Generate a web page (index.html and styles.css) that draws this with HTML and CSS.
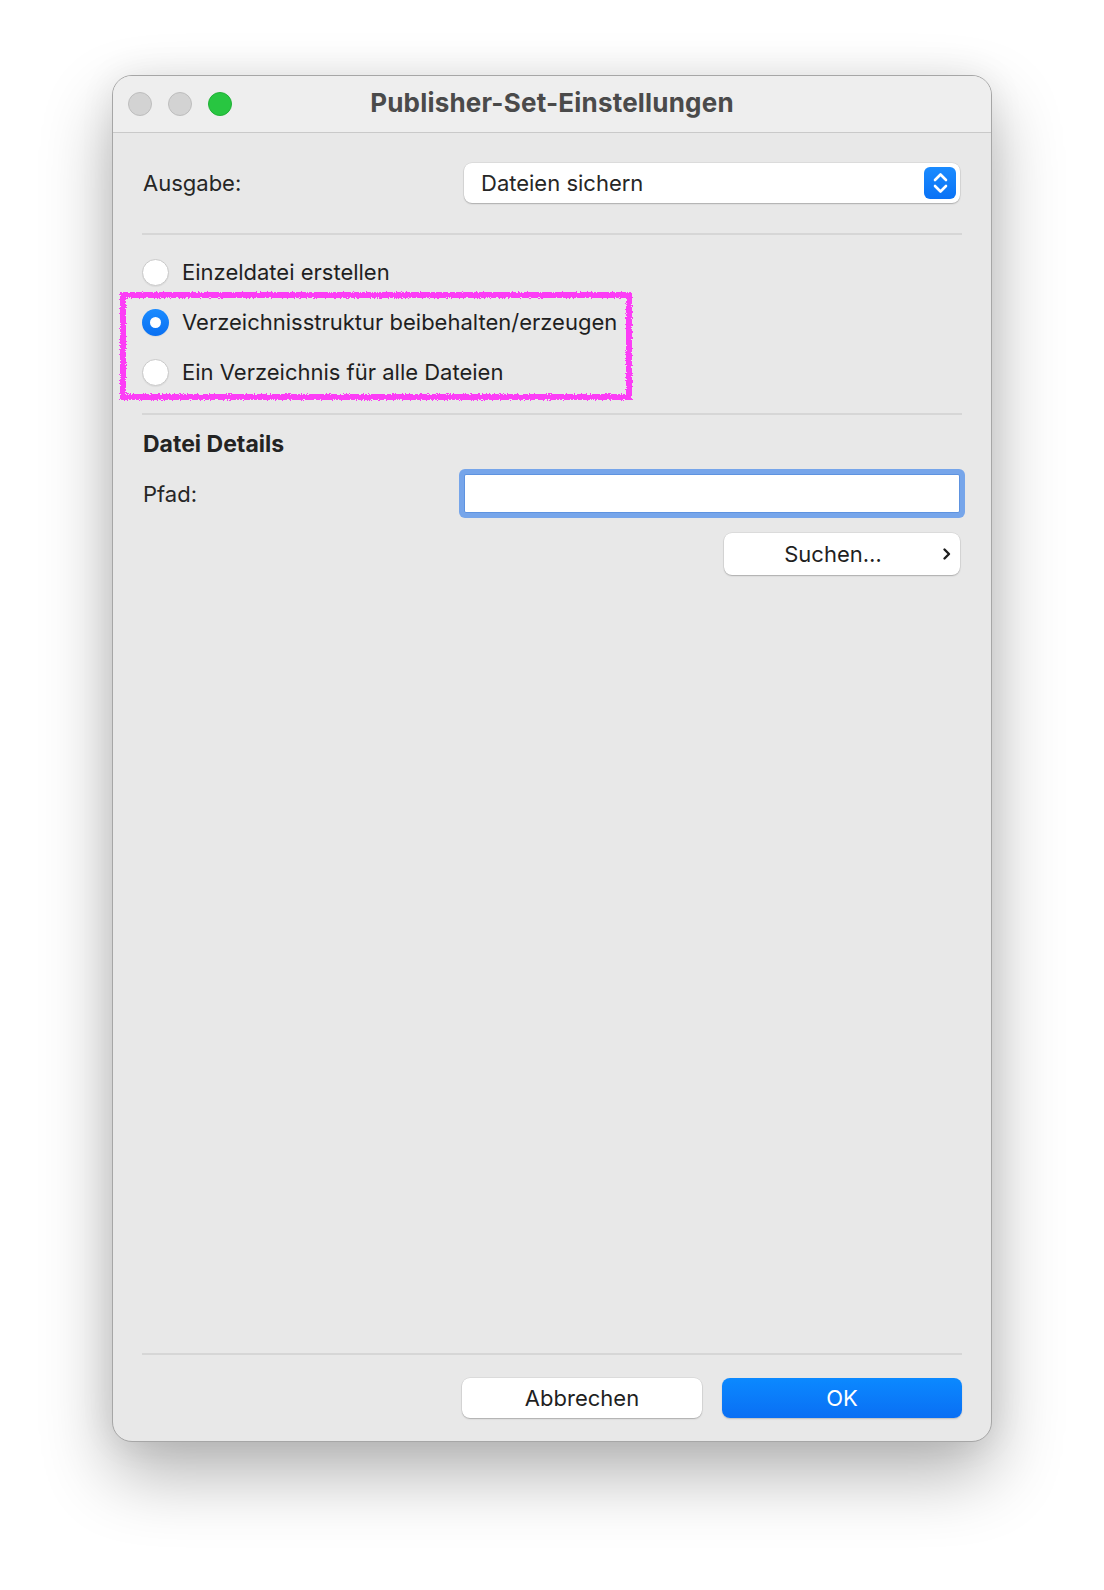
FILE: index.html
```html
<!DOCTYPE html>
<html lang="de">
<head>
<meta charset="utf-8">
<title>Publisher-Set-Einstellungen</title>
<link rel="stylesheet" href="styles.css">
</head>
<body>
<svg class="defs" width="0" height="0" aria-hidden="true">
  <filter id="chalk" x="-10%" y="-10%" width="120%" height="120%">
    <feTurbulence type="fractalNoise" baseFrequency="0.8" numOctaves="2" seed="3" result="noise"/>
    <feDisplacementMap in="SourceGraphic" in2="noise" scale="4" xChannelSelector="R" yChannelSelector="G"/>
  </filter>
</svg>
<div class="window">
  <div class="titlebar">
    <div class="lights">
      <span class="light gray"></span>
      <span class="light gray"></span>
      <span class="light green"></span>
    </div>
    <div class="title">Publisher-Set-Einstellungen</div>
    <div></div>
  </div>
  <div class="content">
    <div class="form-row output-row">
      <div class="label">Ausgabe:</div>
      <div class="popup">
        <span class="popup-text">Dateien sichern</span>
        <span class="stepper">
          <svg width="32" height="32" viewBox="0 0 32 32">
            <polyline points="11,13 16.5,7.5 22,13" fill="none" stroke="#fff" stroke-width="2.6" stroke-linecap="round" stroke-linejoin="round"/>
            <polyline points="11,19 16.5,24.5 22,19" fill="none" stroke="#fff" stroke-width="2.6" stroke-linecap="round" stroke-linejoin="round"/>
          </svg>
        </span>
      </div>
    </div>
    <div class="sep sep-top"></div>
    <div class="radios">
      <div class="radio-row"><span class="radio"></span><span class="radio-label">Einzeldatei erstellen</span></div>
      <div class="radio-row"><span class="radio checked"></span><span class="radio-label">Verzeichnisstruktur beibehalten/erzeugen</span></div>
      <div class="radio-row"><span class="radio"></span><span class="radio-label">Ein Verzeichnis für alle Dateien</span></div>
      <div class="highlight"></div>
    </div>
    <div class="sep sep-mid"></div>
    <div class="section-title">Datei Details</div>
    <div class="form-row path-row">
      <div class="label">Pfad:</div>
      <div class="input"></div>
    </div>
    <div class="browse-row">
      <div class="browse">
        <span class="browse-text">Suchen…</span>
        <svg class="chev" width="10" height="14" viewBox="0 0 10 14">
          <polyline points="2.5,2.5 7,7 2.5,11.5" fill="none" stroke="#1e1e1e" stroke-width="2.4" stroke-linecap="round" stroke-linejoin="round"/>
        </svg>
      </div>
    </div>
    <div class="spacer"></div>
    <div class="sep"></div>
    <div class="footer">
      <div class="btn">Abbrechen</div>
      <div class="btn primary">OK</div>
    </div>
  </div>
</div>
</body>
</html>
```

FILE: styles.css
```css
html, body {
  margin: 0;
  padding: 0;
}
body {
  width: 1104px;
  height: 1590px;
  box-sizing: border-box;
  padding: 75px 0 0 112px;
  background: #ffffff;
  font-family: Inter, "Noto Sans", sans-serif;
  color: #262626;
  overflow: hidden;
}
.defs {
  position: absolute;
  width: 0;
  height: 0;
}
.window {
  width: 880px;
  height: 1367px;
  box-sizing: border-box;
  border: 1px solid #a6a6a6;
  border-radius: 20px;
  background: #e8e8e8;
  box-shadow: 0 32px 70px rgba(0,0,0,0.30), 0 0 36px rgba(0,0,0,0.07);
  display: flex;
  flex-direction: column;
  overflow: hidden;
}
.titlebar {
  height: 57px;
  box-sizing: border-box;
  border-bottom: 1px solid #c9c9c9;
  background: #eeeeee;
  display: grid;
  grid-template-columns: 1fr auto 1fr;
  align-items: center;
}
.lights {
  display: flex;
  gap: 16px;
  padding-left: 15px;
}
.light {
  width: 24px;
  height: 24px;
  box-sizing: border-box;
  border-radius: 50%;
}
.light.gray {
  background: #d3d3d3;
  border: 1px solid #bdbdbd;
}
.light.green {
  background: #28c641;
  border: 1px solid #20b036;
}
.title {
  font-weight: 700;
  font-size: 26px;
  color: #4a4a4a;
  letter-spacing: 0.2px;
  margin-top: -3px;
}
.content {
  flex: 1;
  display: flex;
  flex-direction: column;
  padding: 30px 29px 23px 29px;
  font-size: 22px;
}
.form-row {
  display: grid;
  grid-template-columns: 322px 1fr;
  align-items: center;
}
.label {
  padding-left: 1px;
}
.popup {
  width: 496px;
  height: 40px;
  box-sizing: border-box;
  background: #ffffff;
  border-radius: 8px;
  box-shadow: 0 1px 1.5px rgba(0,0,0,0.22), 0 0 0 0.5px rgba(0,0,0,0.10);
  display: flex;
  align-items: center;
  padding: 0 4px 0 17px;
}
.popup-text {
  flex: 1;
  color: #262626;
}
.stepper {
  width: 32px;
  height: 32px;
  border-radius: 6px;
  background: linear-gradient(180deg, #1a8bff 0%, #0a72f5 100%);
  display: flex;
}
.sep {
  height: 2px;
  background: #d6d6d6;
}
.sep-top {
  margin-top: 30px;
}
.radios {
  margin-top: 12px;
  position: relative;
}
.radio-row {
  height: 50px;
  display: flex;
  align-items: center;
  gap: 13px;
}
.radio {
  width: 27px;
  height: 27px;
  box-sizing: border-box;
  border-radius: 50%;
  background: #ffffff;
  border: 1px solid #c9c9c9;
  box-shadow: 0 1px 1px rgba(0,0,0,0.06);
  display: flex;
  align-items: center;
  justify-content: center;
}
.radio.checked {
  border: none;
  background: linear-gradient(180deg, #1a8bff 0%, #0a70f2 100%);
}
.radio.checked::after {
  content: "";
  width: 11px;
  height: 11px;
  border-radius: 50%;
  background: #ffffff;
}
.radio-label {
  color: #1f1f1f;
}
.highlight {
  position: absolute;
  left: -22px;
  top: 45px;
  width: 512px;
  height: 108px;
  box-sizing: border-box;
  border: 6px solid #fc3cf6;
  filter: url(#chalk);
}
.sep-mid {
  margin-top: 16px;
}
.section-title {
  margin-top: 15px;
  height: 28px;
  line-height: 28px;
  font-weight: 700;
  font-size: 23px;
  color: #232323;
  padding-left: 1px;
}
.path-row {
  margin-top: 16px;
}
.input {
  width: 496px;
  height: 39px;
  box-sizing: border-box;
  background: #ffffff;
  border: 1px solid #5e93e0;
  border-radius: 2px;
  box-shadow: 0 0 0 5px #76a5ea;
}
.browse-row {
  margin-top: 20px;
  display: flex;
  justify-content: flex-end;
  padding-right: 2px;
}
.browse {
  width: 236px;
  height: 42px;
  box-sizing: border-box;
  background: #ffffff;
  border-radius: 8px;
  box-shadow: 0 1px 1.5px rgba(0,0,0,0.22), 0 0 0 0.5px rgba(0,0,0,0.10);
  display: flex;
  align-items: center;
  padding-right: 8px;
}
.browse-text {
  flex: 1;
  text-align: center;
  color: #1f1f1f;
}
.spacer {
  flex: 1;
}
.footer {
  margin-top: 23px;
  display: flex;
  justify-content: flex-end;
  gap: 20px;
}
.btn {
  width: 240px;
  height: 40px;
  box-sizing: border-box;
  border-radius: 8px;
  background: #ffffff;
  box-shadow: 0 1px 1.5px rgba(0,0,0,0.22), 0 0 0 0.5px rgba(0,0,0,0.10);
  display: flex;
  align-items: center;
  justify-content: center;
  color: #1f1f1f;
}
.btn.primary {
  background: linear-gradient(180deg, #0b89ff 0%, #0a6ff4 100%);
  color: #ffffff;
  box-shadow: 0 1px 1.5px rgba(0,0,0,0.18);
}
```
